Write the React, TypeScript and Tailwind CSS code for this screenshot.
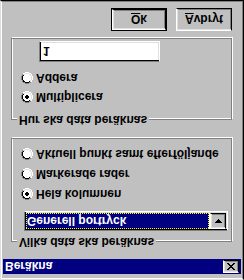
import React from "react";

const OUTER: [number, number][] = [
  [4, 0], [5, 0], [6, 0], [7, 0], [2, 1], [3, 1], [8, 1], [9, 1], [1, 2], [10, 2], [1, 3], [10, 3],
  [0, 4], [11, 4], [0, 5], [11, 5], [0, 6], [11, 6], [0, 7], [11, 7], [1, 8], [10, 8], [1, 9], [10, 9],
  [2, 10], [3, 10], [8, 10], [9, 10], [4, 11], [5, 11], [6, 11], [7, 11],
];
const INNER: [number, number][] = [
  [4, 1], [5, 1], [6, 1], [7, 1], [2, 2], [3, 2], [8, 2], [9, 2], [2, 3], [9, 3],
  [1, 4], [10, 4], [1, 5], [10, 5], [1, 6], [10, 6], [1, 7], [10, 7], [2, 8], [9, 8],
  [2, 9], [3, 9], [8, 9], [9, 9], [4, 10], [5, 10], [6, 10], [7, 10],
];
const FILL: [number, number, number][] = [
  [4, 2, 4], [3, 3, 6], [2, 4, 8], [2, 5, 8], [2, 6, 8], [2, 7, 8], [3, 8, 6], [4, 9, 4],
];
const DOT: [number, number, number][] = [
  [5, 4, 2], [4, 5, 4], [4, 6, 4], [5, 7, 2],
];

function Radio({ checked }: { checked?: boolean }) {
  return (
    <svg width="12" height="12" viewBox="0 0 12 12" shapeRendering="crispEdges" className="shrink-0">
      {FILL.map(([x, y, w], i) => (
        <rect key={"f" + i} x={x} y={y} width={w} height={1} fill="#ffffff" />
      ))}
      {OUTER.map(([x, y], i) => (
        <rect key={"o" + i} x={x} y={y} width={1} height={1} fill={x + y < 11 ? "#808080" : "#ffffff"} />
      ))}
      {INNER.map(([x, y], i) => (
        <rect key={"i" + i} x={x} y={y} width={1} height={1} fill={x + y < 11 ? "#000000" : "#dfdfdf"} />
      ))}
      {checked &&
        DOT.map(([x, y, w], i) => (
          <rect key={"d" + i} x={x} y={y} width={w} height={1} fill="#000000" />
        ))}
    </svg>
  );
}

const raised =
  "border border-t-white border-l-white border-r-black border-b-black shadow-[inset_1px_1px_0_#dfdfdf,inset_-1px_-1px_0_#808080]";
const sunken =
  "border border-t-[#808080] border-l-[#808080] border-r-white border-b-white shadow-[inset_1px_1px_0_#000,inset_-1px_-1px_0_#dfdfdf]";

function CloseGlyph() {
  const rows = [
    [0, 1, 6, 7],
    [1, 2, 5, 6],
    [2, 3, 4, 5],
    [3, 4],
    [2, 3, 4, 5],
    [1, 2, 5, 6],
    [0, 1, 6, 7],
  ];
  return (
    <svg width="8" height="7" viewBox="0 0 8 7" shapeRendering="crispEdges">
      {rows.flatMap((r, y) =>
        r.map((x) => <rect key={`${x}-${y}`} x={x} y={y} width={1} height={1} fill="#000" />)
      )}
    </svg>
  );
}

function DownArrow() {
  return (
    <svg width="7" height="4" viewBox="0 0 7 4" shapeRendering="crispEdges">
      <rect x={0} y={0} width={7} height={1} fill="#000" />
      <rect x={1} y={1} width={5} height={1} fill="#000" />
      <rect x={2} y={2} width={3} height={1} fill="#000" />
      <rect x={3} y={3} width={1} height={1} fill="#000" />
    </svg>
  );
}

function RadioRow({ label, checked, h }: { label: string; checked?: boolean; h: string }) {
  return (
    <div className={`flex items-center gap-[3px] pl-[9px] ${h}`}>
      <Radio checked={checked} />
      <span className="leading-none whitespace-nowrap">{label}</span>
    </div>
  );
}

export default function App() {
  return (
    <div className="w-[244px] h-[280px] -scale-y-100 bg-[#c0c0c0] border border-t-[#dfdfdf] border-l-[#dfdfdf] border-r-black border-b-black font-['Liberation_Sans',Arial,sans-serif] font-bold text-[12px] text-black">
      <div className="h-full border border-t-white border-l-white border-r-[#808080] border-b-[#808080] flex flex-col">
        {/* Title bar */}
        <div className="mt-[4px] mx-[1px] h-[15px] bg-[#000080] flex items-center justify-between pl-[2px] pr-[2px]">
          <span className="text-white leading-none">Beräkna</span>
          <div className={`w-[16px] h-[13px] bg-[#c0c0c0] flex items-center justify-center ${raised}`}>
            <CloseGlyph />
          </div>
        </div>

        {/* Group: Vilka data ska beräknas */}
        <div className="relative mt-[17px] ml-[9px] w-[221px] h-[104px] shrink-0 border border-[#808080] shadow-[inset_1px_1px_0_#fff,1px_1px_0_#fff] flex flex-col">
          <span className="absolute -top-[8px] left-[5px] px-[2px] bg-[#c0c0c0] leading-[14px] whitespace-nowrap">
            Vilka data ska beräknas
          </span>
          <div className={`mt-[10px] ml-[12px] w-[204px] h-[20px] bg-white p-[1px] flex ${sunken}`}>
            <div className="w-[183px] h-full bg-[#000080] border border-dotted border-[#ffff00] text-white flex items-center leading-none whitespace-nowrap">
              Generell portryck
            </div>
            <div className={`ml-[1px] w-[16px] h-full bg-[#c0c0c0] flex items-center justify-center ${raised}`}>
              <DownArrow />
            </div>
          </div>
          <div className="mt-[7px] flex flex-col">
            <RadioRow label="Hela kolumnen" checked h="h-[20px]" />
            <RadioRow label="Markerade rader" h="h-[20px]" />
            <RadioRow label="Aktuell punkt samt efterföljande" h="h-[20px]" />
          </div>
        </div>

        {/* Group: Hur ska data beräknas */}
        <div className="relative mt-[18px] ml-[9px] w-[221px] h-[82px] shrink-0 border border-[#808080] shadow-[inset_1px_1px_0_#fff,1px_1px_0_#fff] flex flex-col">
          <span className="absolute -top-[8px] left-[5px] px-[2px] bg-[#c0c0c0] leading-[14px] whitespace-nowrap">
            Hur ska data beräknas
          </span>
          <div className="mt-[12px] flex flex-col">
            <RadioRow label="Multiplicera" checked h="h-[19px]" />
            <RadioRow label="Addera" h="h-[19px]" />
          </div>
          <div className={`mt-[7px] ml-[27px] w-[121px] h-[21px] bg-white pl-[3px] flex items-center leading-none ${sunken}`}>
            1
          </div>
        </div>

        {/* Buttons */}
        <div className="mt-[7px] flex">
          <div className="ml-[109px] w-[56px] h-[23px] border border-black">
            <div className={`w-full h-full bg-[#c0c0c0] flex items-center justify-center leading-none ${raised}`}>
              <span className="underline">O</span>k
            </div>
          </div>
          <div className={`ml-[9px] w-[56px] h-[23px] bg-[#c0c0c0] flex items-center justify-center leading-none ${raised}`}>
            <span className="underline">A</span>vbryt
          </div>
        </div>
      </div>
    </div>
  );
}
